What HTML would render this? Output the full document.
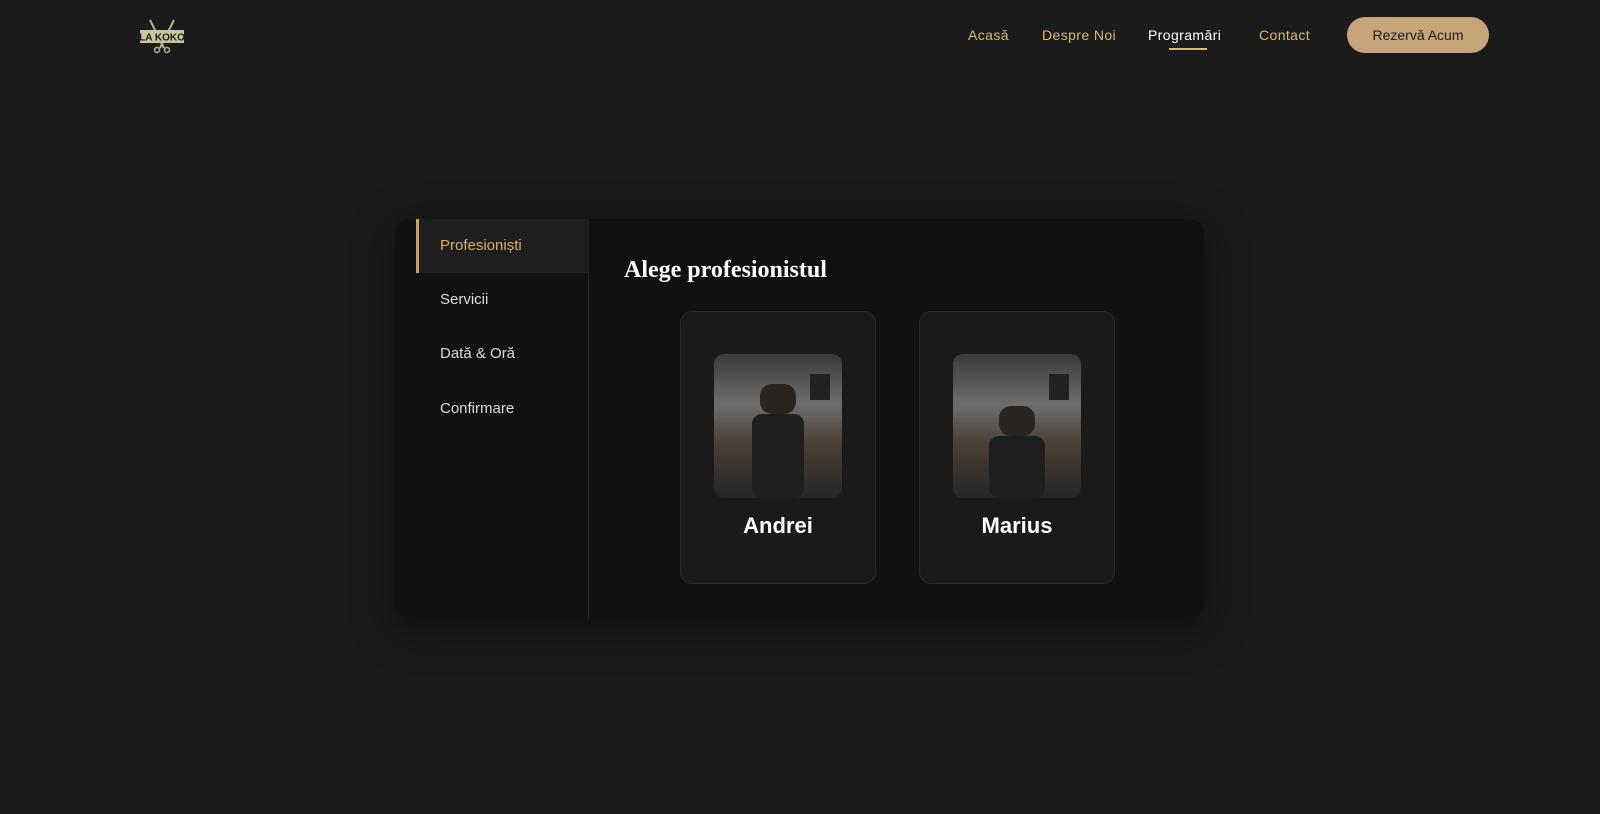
<!DOCTYPE html>
<html><head><meta charset="utf-8"><style>
*{margin:0;padding:0;box-sizing:border-box}
body{width:1600px;height:814px;background:#1b1b1b;font-family:"Liberation Sans",sans-serif;position:relative;overflow:hidden}
.nav a{position:absolute;top:27px;font-size:14px;color:#d8b97c;text-decoration:none;letter-spacing:.4px}
.btn{position:absolute;left:1347px;top:17px;width:142px;height:36px;border-radius:18px;background:#c6a678;color:#1b1b1b;font-size:14px;text-align:center;line-height:36px}
.panel{position:absolute;left:395px;top:219px;width:809px;height:399px;background:#111;border-radius:14px;box-shadow:0 10px 40px rgba(0,0,0,.5);overflow:hidden}
.side{position:absolute;left:0;top:0;width:194px;height:399px;border-right:1px solid #2a2a2a}
.tab{position:absolute;left:21px;width:173px;height:54px;line-height:54px;padding-left:24px;font-size:15px;color:#ddd}
.card{position:absolute;top:92px;width:196px;height:273px;background:#1a1a1a;border:1px solid #2a2a2a;border-radius:12px}
.ph{position:absolute;left:33px;top:42px;width:128px;height:144px;border-radius:10px;overflow:hidden;background:linear-gradient(180deg,#3a3a3a 0%,#6e6e6e 35%,#4a4038 62%,#262626 100%)}
.nm{position:absolute;top:201px;width:100%;text-align:center;color:#fff;font-weight:bold;font-size:22px}
</style></head><body>
<svg style="position:absolute;left:138px;top:18px" width="48" height="36" viewBox="0 0 48 36">
<path d="M12 2L26 30M36 2L22 30" stroke="#b9b38f" stroke-width="2"/>
<circle cx="19" cy="32" r="2.5" fill="none" stroke="#b9b38f" stroke-width="1.5"/><circle cx="29" cy="32" r="2.5" fill="none" stroke="#b9b38f" stroke-width="1.5"/>
<rect x="2" y="12" width="44" height="13" fill="#c9c39e"/>
<text x="24" y="22.5" text-anchor="middle" font-family="Liberation Sans" font-weight="bold" font-size="10" fill="#1b1b1b">LA KOKO</text>
</svg>
<div class="nav">
<a style="left:968px">Acasă</a>
<a style="left:1042px">Despre Noi</a>
<a style="left:1148px;color:#fff">Programări</a>
<a style="left:1259px">Contact</a>
</div>
<div style="position:absolute;left:1169px;top:48px;width:38px;height:2px;background:#d8b97c"></div>
<div class="btn">Rezervă Acum</div>
<div class="panel">
<div class="side">
<div class="tab" style="top:0;background:#1e1e1e;color:#d8b06a;border-left:3px solid #c9a063;padding-left:21px">Profesioniști</div>
<div class="tab" style="top:54px">Servicii</div>
<div class="tab" style="top:108px">Dată &amp; Oră</div>
<div class="tab" style="top:163px">Confirmare</div>
</div>
<div style="position:absolute;left:229px;top:38px;font-family:'Liberation Serif',serif;font-weight:bold;font-size:24px;color:#fff">Alege profesionistul</div>
<div class="card" style="left:285px"><div class="ph"><svg width="128" height="144"><rect x="46" y="30" width="36" height="30" rx="12" fill="#2a2420"/><rect x="38" y="60" width="52" height="84" rx="10" fill="#1e1e1e"/><rect x="96" y="20" width="20" height="26" fill="#222"/></svg></div><div class="nm">Andrei</div></div>
<div class="card" style="left:524px"><div class="ph"><svg width="128" height="144"><rect x="46" y="52" width="36" height="30" rx="12" fill="#2a2420"/><rect x="36" y="82" width="56" height="62" rx="10" fill="#1e1e1e"/><rect x="96" y="20" width="20" height="26" fill="#222"/></svg></div><div class="nm">Marius</div></div>
</div>
</body></html>
